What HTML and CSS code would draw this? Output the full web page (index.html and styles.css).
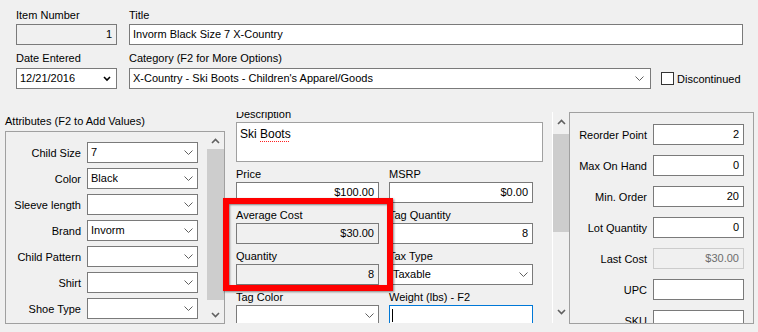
FILE: index.html
```html
<!DOCTYPE html>
<html>
<head>
<meta charset="utf-8">
<link rel="stylesheet" href="styles.css">
</head>
<body>
<div class="win">
  <div class="top">
    <div class="lbl l1">Item Number</div>
    <div class="lbl l1">Title</div>
    <div class="field dis num">1</div>
    <div class="field">Invorm Black Size 7 X-Country</div>
    <div class="lbl l2">Date Entered</div>
    <div class="lbl l2">Category (F2 for More Options)</div>
    <div class="field combo date"><span>12/21/2016</span><svg class="chev-b" width="8" height="6" viewBox="0 0 8 6"><polyline points="1,1 4,4 7,1" /></svg></div>
    <div class="catrow">
      <div class="field combo cat"><span>X-Country - Ski Boots - Children's Apparel/Goods</span><svg class="chev" width="9" height="5" viewBox="0 0 9 5"><polyline points="0.5,0.5 4.5,4.5 8.5,0.5" /></svg></div>
      <div class="check"><span class="cbox"></span><span>Discontinued</span></div>
    </div>
  </div>

  <div class="main">
    <section class="attrs">
      <div class="lbl attr-title">Attributes (F2 to Add Values)</div>
      <div class="attrbox">
        <div class="attrlist">
          <div class="albl">Child Size</div>
          <div class="field combo"><span>7</span><svg class="chev" width="9" height="5" viewBox="0 0 9 5"><polyline points="0.5,0.5 4.5,4.5 8.5,0.5" /></svg></div>
          <div class="albl">Color</div>
          <div class="field combo"><span>Black</span><svg class="chev" width="9" height="5" viewBox="0 0 9 5"><polyline points="0.5,0.5 4.5,4.5 8.5,0.5" /></svg></div>
          <div class="albl">Sleeve length</div>
          <div class="field combo"><span></span><svg class="chev" width="9" height="5" viewBox="0 0 9 5"><polyline points="0.5,0.5 4.5,4.5 8.5,0.5" /></svg></div>
          <div class="albl">Brand</div>
          <div class="field combo"><span>Invorm</span><svg class="chev" width="9" height="5" viewBox="0 0 9 5"><polyline points="0.5,0.5 4.5,4.5 8.5,0.5" /></svg></div>
          <div class="albl">Child Pattern</div>
          <div class="field combo"><span></span><svg class="chev" width="9" height="5" viewBox="0 0 9 5"><polyline points="0.5,0.5 4.5,4.5 8.5,0.5" /></svg></div>
          <div class="albl">Shirt</div>
          <div class="field combo"><span></span><svg class="chev" width="9" height="5" viewBox="0 0 9 5"><polyline points="0.5,0.5 4.5,4.5 8.5,0.5" /></svg></div>
          <div class="albl">Shoe Type</div>
          <div class="field combo"><span></span><svg class="chev" width="9" height="5" viewBox="0 0 9 5"><polyline points="0.5,0.5 4.5,4.5 8.5,0.5" /></svg></div>
        </div>
        <div class="vscroll attr-scroll">
          <svg class="sarrow" width="9" height="6" viewBox="0 0 9 6"><polyline points="1,5 4.5,1.5 8,5" /></svg>
          <div class="thumb"></div>
          <div class="track"></div>
          <svg class="sarrow" width="9" height="6" viewBox="0 0 9 6"><polyline points="1,1 4.5,4.5 8,1" /></svg>
        </div>
      </div>
    </section>

    <section class="mid">
      <div class="midview">
        <div class="midcontent">
          <div class="lbl">Description</div>
          <div class="desc">Ski <span class="spell">Boots</span></div>
          <div class="grid2">
            <div class="grp">
              <div class="lbl">Price</div>
              <div class="field num">$100.00</div>
            </div>
            <div class="grp">
              <div class="lbl">MSRP</div>
              <div class="field num">$0.00</div>
            </div>
            <div class="grp">
              <div class="lbl">Average Cost</div>
              <div class="field dis num">$30.00</div>
            </div>
            <div class="grp">
              <div class="lbl">Tag Quantity</div>
              <div class="field num">8</div>
            </div>
            <div class="grp">
              <div class="lbl">Quantity</div>
              <div class="field dis num">8</div>
            </div>
            <div class="grp">
              <div class="lbl">Tax Type</div>
              <div class="field combo"><span>Taxable</span><svg class="chev" width="9" height="5" viewBox="0 0 9 5"><polyline points="0.5,0.5 4.5,4.5 8.5,0.5" /></svg></div>
            </div>
            <div class="grp">
              <div class="lbl">Tag Color</div>
              <div class="field combo"><span></span><svg class="chev" width="9" height="5" viewBox="0 0 9 5"><polyline points="0.5,0.5 4.5,4.5 8.5,0.5" /></svg></div>
            </div>
            <div class="grp">
              <div class="lbl">Weight (lbs) - F2</div>
              <div class="field focus"><span class="caret"></span></div>
            </div>
          </div>
        </div>
      </div>
      <div class="vscroll mid-scroll">
        <svg class="sarrow" width="9" height="6" viewBox="0 0 9 6"><polyline points="1,5 4.5,1.5 8,5" /></svg>
        <div class="thumb"></div>
        <div class="track"></div>
        <svg class="sarrow" width="9" height="6" viewBox="0 0 9 6"><polyline points="1,1 4.5,4.5 8,1" /></svg>
      </div>
    </section>

    <section class="right">
      <div class="rgrid">
        <div class="rlbl">Reorder Point</div>
        <div class="field num">2</div>
        <div class="rlbl">Max On Hand</div>
        <div class="field num">0</div>
        <div class="rlbl">Min. Order</div>
        <div class="field num">20</div>
        <div class="rlbl">Lot Quantity</div>
        <div class="field num">0</div>
        <div class="rlbl">Last Cost</div>
        <div class="field num ro">$30.00</div>
        <div class="rlbl">UPC</div>
        <div class="field"></div>
        <div class="rlbl">SKU</div>
        <div class="field"></div>
      </div>
    </section>
  </div>

  <div class="annot"></div>
</div>
</body>
</html>
```

FILE: styles.css
```css
* { box-sizing: border-box; }

html, body {
  margin: 0;
  padding: 0;
  background: #f0f0f0;
}

body {
  font-family: "Liberation Sans", Arial, sans-serif;
  font-size: 11px;
  color: #000;
}

.win {
  position: relative;
  width: 758px;
  height: 332px;
  overflow: hidden;
  background: #f0f0f0;
}

.lbl {
  line-height: 16px;
  height: 16px;
  white-space: nowrap;
}

/* ---------- top area ---------- */
.top {
  display: grid;
  grid-template-columns: 101px 1fr;
  column-gap: 12px;
  padding: 7px 15px 0 16px;
}

.l1 { margin-bottom: 1px; }
.l2 { margin-top: 5px; margin-bottom: 2px; }

.field {
  height: 21px;
  border: 1px solid #7a7a7a;
  background: #fff;
  padding: 0 3px;
  line-height: 19px;
  white-space: nowrap;
  overflow: hidden;
}

.field.num {
  text-align: right;
  padding-right: 4px;
}

.field.dis {
  background: #f0f0f0;
}

.field.ro {
  background: #f0f0f0;
  border-color: #cccccc;
  color: #6d6d6d;
}

.field.focus {
  border-color: #0078d7;
  display: flex;
  align-items: center;
  padding-left: 2px;
}

.caret {
  display: block;
  width: 1px;
  height: 13px;
  background: #000;
}

.combo {
  display: flex;
  align-items: center;
  justify-content: space-between;
  padding-right: 4px;
}

.combo span {
  overflow: hidden;
  white-space: nowrap;
}

.chev polyline {
  fill: none;
  stroke: #606060;
  stroke-width: 1;
}

.chev-b polyline {
  fill: none;
  stroke: #000;
  stroke-width: 1.6;
}

.date { padding-right: 5px; }
.cat { padding-right: 6px; width: 522px; flex: none; }

.catrow {
  display: flex;
  align-items: center;
}

.check {
  display: flex;
  align-items: center;
  margin-left: 10px;
  line-height: 16px;
}

.cbox {
  display: block;
  width: 13px;
  height: 13px;
  border: 1px solid #333;
  background: #fff;
  margin-right: 3px;
}

/* ---------- main area ---------- */
.main {
  display: flex;
  margin-top: 23px;
  padding-left: 5px;
}

.attrs {
  width: 220px;
  flex: none;
}

.attr-title {
  margin-top: 1px;
  margin-bottom: 2px;
}

.attrbox {
  height: 193px;
  border: 1px solid #a0a0a0;
  display: flex;
}

.attrlist {
  flex: 1;
  display: grid;
  grid-template-columns: 75px 111px;
  column-gap: 6px;
  row-gap: 5px;
  align-content: start;
  align-items: center;
  padding-top: 10px;
}

.albl {
  text-align: right;
  white-space: nowrap;
}

.vscroll {
  flex: none;
  display: flex;
  flex-direction: column;
  align-items: center;
  background: #f0f0f0;
}

.vscroll .thumb {
  width: 100%;
  background: #cdcdcd;
}

.vscroll .track {
  flex: 1;
}

.sarrow polyline {
  fill: none;
  stroke: #606060;
  stroke-width: 1.6;
}

.attr-scroll {
  width: 17px;
  padding: 6px 0 5px;
}

.attr-scroll .thumb {
  height: 151px;
  margin-top: 5px;
}

/* middle */
.mid {
  display: flex;
  flex: none;
  width: 344px;
  height: 211px;
}

.midview {
  width: 328px;
  height: 211px;
  overflow: hidden;
  border-right: 1px solid #ffffff;
  padding-left: 11px;
}

.midcontent {
  margin-top: -6px;
}

.desc {
  width: 307px;
  height: 40px;
  border: 1px solid #a0a0a0;
  background: #fff;
  font-size: 12px;
  line-height: 16px;
  padding: 3px 3px;
}

.spell {
  text-decoration-line: underline;
  text-decoration-style: dotted;
  text-decoration-color: #ff2020;
  text-decoration-thickness: 1px;
  text-underline-offset: 3px;
}

.grid2 {
  display: grid;
  grid-template-columns: 143px 144px;
  column-gap: 10px;
}

.grp {
  margin-top: 4px;
}

.mid-scroll {
  width: 16px;
  height: 211px;
  padding: 7px 0 8px;
}

.mid-scroll .thumb {
  height: 98px;
  margin-top: 9px;
}

/* right panel */
.right {
  flex: none;
  width: 185px;
  height: 212px;
  border: 1px solid #a0a0a0;
  overflow: hidden;
}

.rgrid {
  display: grid;
  grid-template-columns: 1fr 91px;
  column-gap: 6px;
  row-gap: 10px;
  align-items: center;
  padding: 11px 9px 0 0;
}

.rlbl {
  text-align: right;
  white-space: nowrap;
}

/* red annotation overlay */
.annot {
  position: absolute;
  left: 223px;
  top: 198px;
  width: 170px;
  height: 93px;
  border: 6px solid #ff0000;
  box-shadow: 1px 1px 2px rgba(0,0,0,0.45), inset 1px 1px 2px rgba(0,0,0,0.45);
  pointer-events: none;
}
```
